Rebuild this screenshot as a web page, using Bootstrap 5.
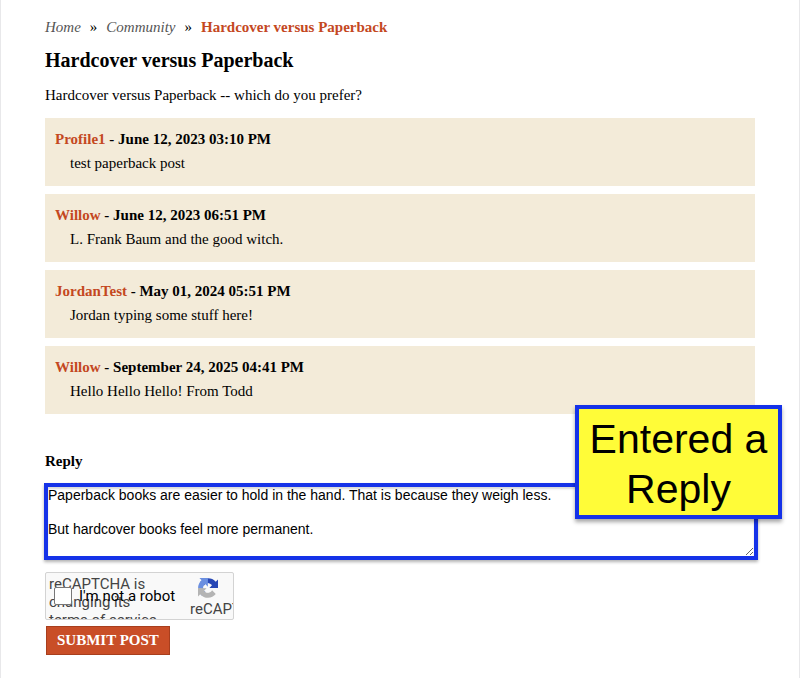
<!DOCTYPE html>
<html lang="en">
<head>
<meta charset="utf-8">
<meta name="viewport" content="width=device-width, initial-scale=1">
<title>Hardcover versus Paperback</title>
<link href="https://cdn.jsdelivr.net/npm/bootstrap@5.3.0/dist/css/bootstrap.min.css" rel="stylesheet">
<style>
body { font-family: "Liberation Serif", "Times New Roman", serif; font-size: 15px; line-height: 20px; color: #000; background: #fff; }
.page { padding: 17px 44px 23px 44px; border: solid #e8e8ea; border-width: 0 1px; min-height: 100vh; }
.crumbs { gap: 9px; }
.crumbs a { color: #555; font-style: italic; text-decoration: none; }
.crumbs .current, .author { color: #c4481f; font-weight: 700; text-decoration: none; }
.page-title { font-size: 20px; line-height: 24px; font-weight: 700; margin: 11px 0 13px; }
.intro { margin-bottom: 13px; }
.posts { gap: 8px; }
.post { background: #f3ebd9; padding: 11px 10px 13px; }
.post-text { margin: 4px 0 0 15px; }
.reply-label { font-weight: 700; margin: 37px 0 12px; }
.reply-wrap { margin: 0 -3px 0 -1px; }
.reply-box { display: block; width: 100%; height: 77px; padding: 0; border: 4px solid #1532e8; border-radius: 0; font: 14px/17px "Liberation Sans", Arial, sans-serif; color: #000; resize: vertical; outline: 0; box-shadow: 0 2px 3px rgba(0,0,0,.3), inset 0 2px 2px rgba(0,0,0,.15); overflow: hidden; }
.callout { right: -24px; top: -78px; width: 207px; padding: 5px 0 1px; border: 4px solid #1532e8; background: #fffc38; font: 41px/50px "Liberation Sans", Arial, sans-serif; box-shadow: 0 3px 4px rgba(0,0,0,.35); text-align: center; }
.captcha { width: 189px; height: 48px; margin-top: 12px; background: #f9f9f9; border: 1px solid #d3d3d3; border-radius: 2px; font-family: Roboto, sans-serif; }
.captcha-note { left: 3px; top: 2px; width: 116px; font-size: 15px; line-height: 18px; color: #444; }
.captcha-check { left: 8px; top: 13px; gap: 7px; }
.captcha-check input { appearance: none; width: 18px; height: 18px; margin: 0; border: 1px solid #777; border-radius: 2px; background: #fff; }
.captcha-check label { font-size: 15px; line-height: 20px; }
.captcha-brand { left: 144px; top: 5px; font-size: 15px; line-height: 18px; color: #444; }
.captcha-brand svg { display: block; margin: 0 0 2px 8px; }
.submit { margin: 6px 0 0 1px; padding: 4px 10px; border: 1px solid #a83e1d; border-radius: 0; background: #c94e27; color: #fff; font: 700 15px/19px "Liberation Serif", serif; }
</style>
<script defer src="https://cdn.jsdelivr.net/npm/bootstrap@5.3.0/dist/js/bootstrap.bundle.min.js"></script>
</head>
<body>
<main class="page">
  <nav class="crumbs d-flex" aria-label="breadcrumb">
    <a href="#">Home</a><span>»</span><a href="#">Community</a><span>»</span><span class="current">Hardcover versus Paperback</span>
  </nav>
  <h1 class="page-title">Hardcover versus Paperback</h1>
  <p class="intro">Hardcover versus Paperback -- which do you prefer?</p>
  <section class="posts d-flex flex-column">
    <article class="post"><div class="fw-bold"><a class="author" href="#">Profile1</a> - June 12, 2023 03:10 PM</div><p class="post-text">test paperback post</p></article>
    <article class="post"><div class="fw-bold"><a class="author" href="#">Willow</a> - June 12, 2023 06:51 PM</div><p class="post-text">L. Frank Baum and the good witch.</p></article>
    <article class="post"><div class="fw-bold"><a class="author" href="#">JordanTest</a> - May 01, 2024 05:51 PM</div><p class="post-text">Jordan typing some stuff here!</p></article>
    <article class="post"><div class="fw-bold"><a class="author" href="#">Willow</a> - September 24, 2025 04:41 PM</div><p class="post-text">Hello Hello Hello! From Todd</p></article>
  </section>
  <form>
    <label class="reply-label d-block" for="reply">Reply</label>
    <div class="reply-wrap position-relative">
      <textarea class="reply-box" id="reply">Paperback books are easier to hold in the hand. That is because they weigh less.

But hardcover books feel more permanent.</textarea>
      <div class="callout position-absolute">Entered a<br>Reply</div>
    </div>
    <div class="captcha position-relative overflow-hidden">
      <div class="captcha-note position-absolute">reCAPTCHA is changing its terms of service.</div>
      <div class="captcha-check position-absolute d-flex align-items-center">
        <input type="checkbox" id="robot"><label for="robot">I'm not a robot</label>
      </div>
      <div class="captcha-brand position-absolute">
        <svg width="20" height="20" viewBox="0 0 64 64" aria-hidden="true">
          <path fill="#2747b5" d="M64 32V4.600l-7.200 7.200A32 32 0 0 0 7.200 12.600l11.800 11.900a15.600 15.600 0 0 1 4.800-5.400c2-1.500 4.800-2.800 8.600-2.800.5 0 .8 0 1.100.2 4.700.4 8.800 3 11.200 6.800L36.400 31.600 64 32"/>
          <path fill="#6b8fe0" d="M31.900 0H4.500l7.200 7.200A32 32 0 0 0 12.500 56.800l11.900-11.900a15.600 15.600 0 0 1-5.400-4.700c-1.500-2-2.800-4.800-2.800-8.700 0-.4 0-.8.2-1.100.4-4.700 3-8.800 6.800-11.200L31.500 27.600 31.900 0"/>
          <path fill="#b4b4b4" d="M0 32v27.400l7.200-7.200A32 32 0 0 0 56.800 51.400L45 39.500a15.600 15.600 0 0 1-4.800 5.400c-2 1.500-4.800 2.800-8.600 2.800-.5 0-.8 0-1.100-.2-4.700-.4-8.800-3-11.200-6.800L27.600 32.400 0 32"/>
        </svg>
        reCAPTCHA
      </div>
    </div>
    <button class="submit btn" type="submit">SUBMIT POST</button>
  </form>
</main>
</body>
</html>
